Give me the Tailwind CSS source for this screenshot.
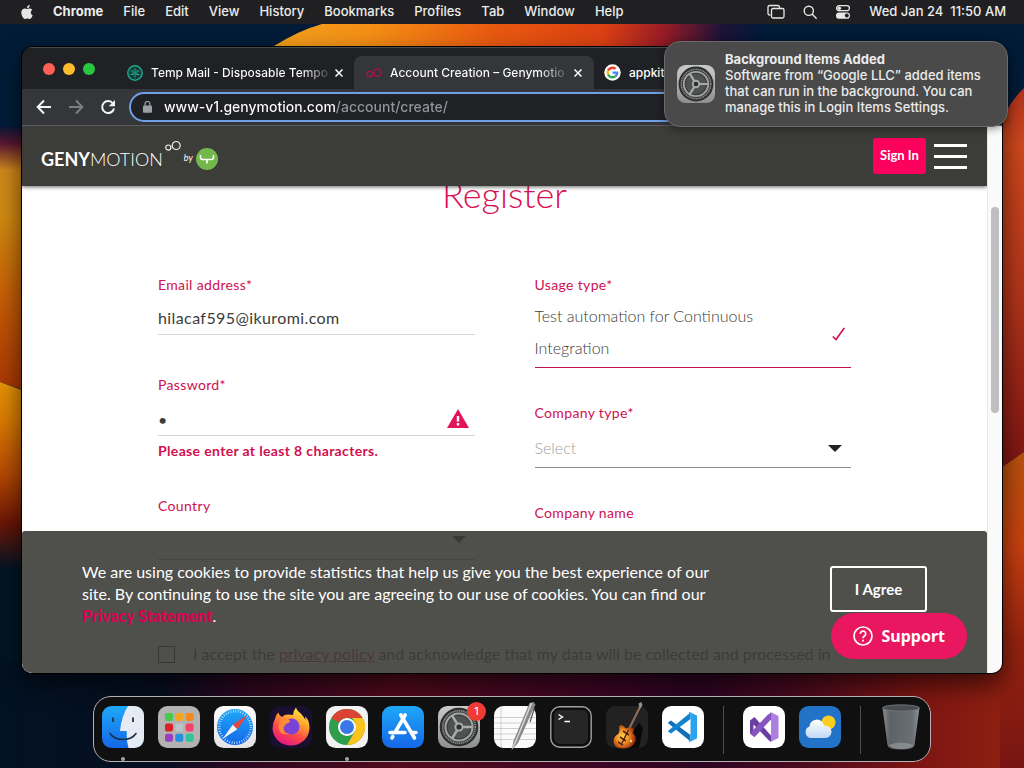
<!DOCTYPE html>
<html lang="en">
<head>
  <meta charset="UTF-8" />
  <meta name="viewport" content="width=device-width, initial-scale=1" />
  <title>Account Creation – Genymotion</title>
  <script src="https://cdn.jsdelivr.net/npm/@tailwindcss/browser@4"></script>
</head>
<body class="bg-[#021526]">

<!-- Shared icons -->
<svg width="0" height="0" class="absolute" aria-hidden="true">
  <defs>
    <linearGradient id="gSilver" x1="0" y1="0" x2="0" y2="1"><stop offset="0" stop-color="#c9cbca" /><stop offset="1" stop-color="#8d908e" /></linearGradient>
    <linearGradient id="gWhite" x1="0" y1="0" x2="0" y2="1"><stop offset="0" stop-color="#fdfdfd" /><stop offset="1" stop-color="#e2e2e4" /></linearGradient>
    <linearGradient id="gBlue" x1="0" y1="0" x2="0" y2="1"><stop offset="0" stop-color="#1fa8f8" /><stop offset="1" stop-color="#1567e6" /></linearGradient>
  </defs>
  <symbol id="settings" viewBox="0 0 42 42">
    <rect width="42" height="42" rx="9.5" fill="url(#gSilver)" />
    <circle cx="21" cy="21" r="18.5" fill="#3a3b3b" />
    <circle cx="21" cy="21" r="16.2" fill="none" stroke="#8f9190" stroke-width="1.6" stroke-dasharray="1.2 .8" />
    <circle cx="21" cy="21" r="13.5" fill="none" stroke="#a3a6a5" stroke-width="2" />
    <circle cx="21" cy="21" r="11.2" fill="#505252" />
    <circle cx="21" cy="21" r="3.6" fill="#2f3030" stroke="#a9acab" stroke-width="2" />
    <path d="M25 21h9M19 17.500l-5-8M19 24.500l-5 8" stroke="#a9acab" stroke-width="2.400" fill="none" />
    <circle cx="21" cy="21" r="18.500" fill="none" stroke="#2b2c2c" stroke-width="1.500" />
  </symbol>
</svg>

<div class="relative isolate flex min-h-screen flex-col overflow-hidden font-['Inter',sans-serif]">

  <!-- Wallpaper -->
  <svg class="absolute inset-0 -z-10 h-full w-full" viewBox="0 0 1024 768" preserveAspectRatio="none" aria-hidden="true">
    <defs>
      <linearGradient id="wTop" gradientUnits="userSpaceOnUse" x1="275" y1="0" x2="760" y2="40">
        <stop offset="0" stop-color="#f2a01c" /><stop offset=".2" stop-color="#f58f15" /><stop offset=".45" stop-color="#ea5a10" />
        <stop offset=".68" stop-color="#dc4013" /><stop offset=".8" stop-color="#9a1c26" /><stop offset=".92" stop-color="#1d1338" /><stop offset="1" stop-color="#031a38" />
      </linearGradient>
      <linearGradient id="wL1" x1="0" y1="0" x2="0" y2="1">
        <stop offset="0" stop-color="#02193a" /><stop offset=".07" stop-color="#5b1730" /><stop offset=".17" stop-color="#d0881c" />
        <stop offset=".35" stop-color="#d08a10" /><stop offset=".65" stop-color="#c55d06" /><stop offset="1" stop-color="#a83504" />
      </linearGradient>
      <linearGradient id="wL2" x1="0" y1="0" x2="0" y2="1">
        <stop offset="0" stop-color="#e59405" /><stop offset=".2" stop-color="#d97c02" /><stop offset=".5" stop-color="#b34703" />
        <stop offset=".75" stop-color="#6b1606" /><stop offset="1" stop-color="#021424" />
      </linearGradient>
      <linearGradient id="wR1" x1="0" y1="0" x2="0" y2="1">
        <stop offset="0" stop-color="#b5331e" /><stop offset=".15" stop-color="#d0481c" /><stop offset=".55" stop-color="#b0341a" /><stop offset="1" stop-color="#7c1312" />
      </linearGradient>
      <linearGradient id="wR2" x1="0" y1="0" x2="0" y2="1">
        <stop offset="0" stop-color="#b8520e" /><stop offset=".3" stop-color="#c8400f" /><stop offset=".6" stop-color="#96230f" /><stop offset="1" stop-color="#781512" />
      </linearGradient>
      <linearGradient id="wBottom" x1="0" y1="0" x2="1" y2="0">
        <stop offset="0" stop-color="#021222" /><stop offset=".16" stop-color="#060e20" /><stop offset=".24" stop-color="#2c0720" />
        <stop offset=".4" stop-color="#520a1c" /><stop offset=".6" stop-color="#3c0624" /><stop offset=".7" stop-color="#2c0522" />
        <stop offset=".8" stop-color="#4a0a1e" /><stop offset=".92" stop-color="#7c1512" /><stop offset="1" stop-color="#8c1f10" />
      </linearGradient>
    </defs>
    <rect width="1024" height="768" fill="#021c38" />
    <path d="M274 46Q300 30 322 24H770V46Z" fill="url(#wTop)" />
    <path d="M0 125H30V392L0 382Z" fill="url(#wL1)" />
    <path d="M0 382L30 393V570H0Z" fill="url(#wL2)" />
    <rect y="568" width="30" height="200" fill="#021424" />
    <path d="M1024 88Q1003 108 995 140V472L1024 452Z" fill="url(#wR1)" />
    <path d="M1024 452L995 472V768H1024Z" fill="url(#wR2)" />
    <path d="M0 660H1000V768H0Z" fill="url(#wBottom)" />
  </svg>

  <!-- Menu bar -->
  <header class="flex h-6 items-center bg-[#202022] pr-[18px] pl-5 text-[13px] font-medium text-[#ececec]">
    <svg class="mr-[19px] size-[14px]" viewBox="0 0 24 24" fill="#e4e4e4" aria-hidden="true"><path d="M12.152 6.896c-.948 0-2.415-1.078-3.96-1.04-2.04.027-3.91 1.183-4.961 3.014-2.117 3.675-.546 9.103 1.519 12.09 1.013 1.454 2.208 3.09 3.792 3.039 1.52-.065 2.09-.987 3.935-.987 1.831 0 2.35.987 3.96.948 1.637-.026 2.676-1.48 3.676-2.948 1.156-1.688 1.636-3.325 1.662-3.415-.039-.013-3.182-1.221-3.22-4.857-.026-3.04 2.48-4.494 2.597-4.559-1.429-2.09-3.623-2.324-4.39-2.376-2-.156-3.675 1.09-4.61 1.09zM15.53 3.83c.843-1.012 1.4-2.427 1.245-3.83-1.207.052-2.662.805-3.532 1.818-.78.896-1.454 2.338-1.273 3.714 1.338.104 2.715-.688 3.559-1.701" /></svg>
    <nav class="flex gap-5">
      <button class="font-bold">Chrome</button>
      <button>File</button>
      <button>Edit</button>
      <button>View</button>
      <button>History</button>
      <button>Bookmarks</button>
      <button>Profiles</button>
      <button>Tab</button>
      <button>Window</button>
      <button>Help</button>
    </nav>
    <div class="ml-auto flex items-center gap-[18px]">
      <svg class="h-4 w-[18px]" viewBox="0 0 18 16" fill="none" stroke="#e8e8e8" stroke-width="1.3" aria-hidden="true"><path d="M3.500 11H2.500A1.500 1.500 0 0 1 1 9.500V3A1.500 1.500 0 0 1 2.500 1.500H11A1.500 1.500 0 0 1 12.500 3V4" /><rect x="4.500" y="4.500" width="12.500" height="9.500" rx="1.500" /></svg>
      <svg class="size-[14px]" viewBox="0 0 14 14" fill="none" stroke="#e8e8e8" stroke-width="1.400" stroke-linecap="round" aria-hidden="true"><circle cx="5.800" cy="5.800" r="4.600" /><path d="M9.300 9.300l3.900 3.900" /></svg>
      <svg class="h-[14px] w-4" viewBox="0 0 16 14" aria-hidden="true"><rect x="1.600" y=".7" width="12.800" height="5" rx="2.500" fill="none" stroke="#e8e8e8" stroke-width="1.300" /><circle cx="4.300" cy="3.200" r="1.800" fill="#e8e8e8" /><rect x="1" y="7.500" width="14" height="6.300" rx="3.100" fill="#e8e8e8" /><circle cx="11.800" cy="10.600" r="2" fill="#202022" /></svg>
      <time class="whitespace-pre">Wed Jan 24  11:50 AM</time>
    </div>
  </header>

  <!-- Browser window -->
  <main class="mt-[22px] mr-[21px] ml-[21px] flex flex-1 flex-col overflow-hidden rounded-[11px] border border-black bg-[#202124] shadow-[0_10px_24px_rgba(0,0,0,0.6)]">

    <!-- Tabs -->
    <div class="flex h-[42px] shrink-0 border-t border-[#4a4b4d] text-xs font-medium text-white">
      <div class="flex w-[332px] items-center pt-2 pl-[21px]">
        <div class="-mt-2 flex gap-2">
          <button aria-label="Close window" class="size-3 rounded-full bg-[#ff5f57]"></button>
          <button aria-label="Minimize window" class="size-3 rounded-full bg-[#febc2e]"></button>
          <button aria-label="Zoom window" class="size-3 rounded-full bg-[#28c840]"></button>
        </div>
        <svg class="ml-8 size-4 shrink-0" viewBox="0 0 16 16" fill="none" stroke="#1fa68a" aria-hidden="true"><circle cx="8" cy="8" r="7.200" stroke-width="1.500" fill="#173d3a" /><path d="M3.500 6H7M9 6h3.500M3.500 9.500H7M9 9.500h3.500M8 3.500v9M5 8h6" stroke-width="1.100" /></svg>
        <span class="ml-2 bg-linear-to-r from-white from-85% to-white/20 bg-clip-text whitespace-nowrap text-transparent">Temp Mail - Disposable Tempo</span>
        <button aria-label="Close tab" class="mr-[7px] ml-auto grid size-4 shrink-0 place-items-center"><svg class="size-2" viewBox="0 0 8 8" stroke="#fff" stroke-width="1.500" aria-hidden="true"><path d="M.5.5l7 7M7.500.5l-7 7" /></svg></button>
      </div>
      <div class="mt-2 flex w-60 items-center rounded-t-lg bg-[#35363a] pl-3">
        <svg class="h-3 w-4 shrink-0" viewBox="0 0 16 12" fill="none" stroke="#a01843" stroke-width="1.400" aria-hidden="true"><circle cx="3.800" cy="7" r="2.800" /><circle cx="11.500" cy="5.600" r="3.700" /></svg>
        <span class="ml-2 bg-linear-to-r from-white from-85% to-white/20 bg-clip-text whitespace-nowrap text-transparent">Account Creation – Genymotio</span>
        <button aria-label="Close tab" class="mr-2 ml-auto grid size-4 shrink-0 place-items-center"><svg class="size-2" viewBox="0 0 8 8" stroke="#fff" stroke-width="1.500" aria-hidden="true"><path d="M.5.5l7 7M7.500.5l-7 7" /></svg></button>
      </div>
      <div class="flex items-center pt-2 pl-[10px]">
        <svg class="size-[17px]" viewBox="-10 -10 68 68" aria-hidden="true"><circle cx="24" cy="24" r="33" fill="#fff" /><path fill="#EA4335" d="M24 9.500c3.540 0 6.710 1.220 9.210 3.600l6.850-6.850C35.900 2.380 30.470 0 24 0 14.620 0 6.510 5.380 2.560 13.220l7.980 6.190C12.430 13.720 17.740 9.500 24 9.500z" /><path fill="#4285F4" d="M46.980 24.550c0-1.570-.15-3.090-.38-4.550H24v9.020h12.940c-.58 2.960-2.260 5.480-4.780 7.180l7.730 6c4.510-4.180 7.090-10.360 7.090-17.650z" /><path fill="#FBBC05" d="M10.530 28.590c-.48-1.450-.76-2.990-.76-4.590s.27-3.140.76-4.590l-7.980-6.190C.92 16.460 0 20.120 0 24c0 3.880.92 7.540 2.560 10.780l7.970-6.190z" /><path fill="#34A853" d="M24 48c6.480 0 11.930-2.130 15.890-5.810l-7.730-6c-2.150 1.450-4.920 2.300-8.160 2.300-6.260 0-11.570-4.220-13.470-9.910l-7.980 6.190C6.510 42.620 14.620 48 24 48z" /></svg>
        <span class="ml-2">appkit</span>
      </div>
    </div>

    <!-- Toolbar -->
    <div class="flex h-[37px] shrink-0 items-center border-b border-[#5c5d60] bg-[#35363a] pl-[14px]">
      <button aria-label="Back" class="mr-4"><svg class="size-4" viewBox="0 0 16 16" fill="none" stroke="#f1f3f4" stroke-width="2" aria-hidden="true"><path d="M15 8H2M8 1.500L1.700 8L8 14.500" /></svg></button>
      <button aria-label="Forward" class="mr-4"><svg class="size-4" viewBox="0 0 16 16" fill="none" stroke="#7d7e81" stroke-width="2" aria-hidden="true"><path d="M1 8H14M8 1.500L14.300 8L8 14.500" /></svg></button>
      <button aria-label="Reload" class="mr-[13px]"><svg class="size-4" viewBox="0 0 16 16" aria-hidden="true"><path d="M13 4.500A6 6 0 1 0 14 9.500" fill="none" stroke="#f1f3f4" stroke-width="2" /><path d="M15 1v6.300H8.700z" fill="#f1f3f4" /></svg></button>
      <div class="flex h-[30px] flex-1 items-center rounded-full border-2 border-[#6f9fe4] bg-[#202124] pl-3">
        <svg class="mr-3 h-3 w-[9px]" viewBox="0 0 9 12" aria-hidden="true"><rect y="4.500" width="9" height="7.200" rx="1" fill="#9aa0a6" /><path d="M2 5V3a2.500 2.500 0 0 1 5 0v2" fill="none" stroke="#9aa0a6" stroke-width="1.200" /></svg>
        <input aria-label="Address" type="text" value="www-v1.genymotion.com/account/create/" class="flex-1 bg-[linear-gradient(90deg,#fff_171px,#93979c_171px)] bg-clip-text text-sm font-medium text-transparent outline-none" />
      </div>
    </div>

    <div class="flex flex-1 bg-[#fafafb]">
      <!-- Web page -->
      <div class="relative flex-1 overflow-hidden bg-white font-['Lato',sans-serif] text-[#3c3c39]">
        <header class="relative z-10 flex h-[60px] items-center bg-[#3c3c39] pr-5 pl-[19px] shadow-[0_1px_4px_rgba(0,0,0,0.6)]">
          <a href="#" class="flex items-center text-white" aria-label="Genymotion">
            <span class="pt-[6px] text-lg"><b>GENY</b><span class="font-light">MOTION</span></span>
            <svg class="mb-5 ml-[2px] h-3 w-4" viewBox="0 0 16 12" fill="none" stroke="#eee" stroke-width="1.200" aria-hidden="true"><circle cx="3.300" cy="7.600" r="2.600" /><circle cx="11.200" cy="5.500" r="4" /></svg>
            <i class="mr-[3px] ml-[3px] pt-1 text-[9px]">by</i>
            <svg class="mt-[6px] size-[22px]" viewBox="0 0 22 22" fill="none" stroke="#fff" stroke-width="1.600" aria-hidden="true"><circle cx="11" cy="11" r="11" fill="#72b84c" stroke="none" /><path d="M4.500 7v2.500Q4.500 11.500 6.500 11.500H15.500Q17.500 11.500 17.500 9.500V7M11 11.500v4" /></svg>
          </a>
          <button class="ml-auto h-9 w-[53px] rounded-[3px] bg-[#fb005c] text-[13px] font-bold text-white">Sign In</button>
          <button aria-label="Menu" class="ml-2 flex w-[33px] flex-col gap-2">
            <span class="h-[3px] bg-white"></span>
            <span class="h-[3px] bg-white"></span>
            <span class="h-[3px] bg-white"></span>
          </button>
        </header>

        <form class="mx-auto max-w-[693px]">
          <h1 class="-mt-[14px] h-11 text-center text-[36px] leading-[44px] font-light text-[#d90f52]">Register</h1>

          <div class="mt-[59px] grid grid-cols-2 gap-[60px] text-[#d0104f]">
            <div>
              <label for="email" class="block text-sm leading-5 tracking-wide">Email address*</label>
              <input id="email" type="email" value="hilacaf595@ikuromi.com" class="h-10 w-full border-b border-[#d6d6d6] pt-[6px] text-base tracking-wide text-[#3c3c39] outline-none" />

              <label for="password" class="mt-10 block text-sm leading-5 tracking-wide">Password*</label>
              <div class="relative">
                <input id="password" type="password" value="g" class="h-[41px] w-full border-b border-[#d6d6d6] pt-2 text-base text-[#3c3c39] outline-none" />
                <svg class="absolute right-[6px] bottom-[7px] h-5 w-[22px]" viewBox="0 0 22 20" aria-hidden="true"><path d="M11 0L22 19H0z" fill="#e2135a" /><path d="M11 7v5.500M11 14v2.500" stroke="#fff" stroke-width="2.400" /></svg>
              </div>
              <p class="mt-[5px] text-sm leading-5 font-bold tracking-wide">Please enter at least 8 characters.</p>

              <label for="country" class="mt-[35px] block text-sm leading-5 tracking-wide">Country</label>
              <div class="relative">
                <select id="country" class="h-11 w-full appearance-none border-b border-[#9a9a9a] text-base text-[#3c3c39]"><option></option></select>
                <svg class="absolute top-5 right-[9px] h-[7px] w-[14px]" viewBox="0 0 14 7" aria-hidden="true"><path d="M0 0h14L7 7z" fill="#222" /></svg>
              </div>
            </div>

            <div>
              <label for="usage" class="block text-sm leading-5 tracking-wide">Usage type*</label>
              <div class="relative mt-[5px] flex items-center justify-between pb-[3px]">
                <span class="max-w-[240px] text-base leading-8 font-light text-[#3c3c39]">Test automation for Continuous Integration</span>
                <svg class="mt-1 mr-[6px] h-[14px] w-[13px]" viewBox="0 0 13 14" fill="none" stroke="#d0104f" stroke-width="1.600" aria-hidden="true"><path d="M.8 9.500L4 12.500L12.300 1" /></svg>
                <select id="usage" class="absolute inset-0 w-full opacity-0"><option>Test automation for Continuous Integration</option></select>
              </div>
              <div class="h-px bg-[#c4124f]"></div>

              <label for="company-type" class="mt-[35px] block text-sm leading-5 tracking-wide">Company type*</label>
              <div class="relative">
                <select id="company-type" class="h-[45px] w-full appearance-none border-b border-[#8c8c8c] pt-[6px] text-base font-light text-[#a3a3a1]"><option>Select</option></select>
                <svg class="absolute top-[22px] right-[9px] h-[7px] w-[14px]" viewBox="0 0 14 7" aria-hidden="true"><path d="M0 0h14L7 7z" fill="#222" /></svg>
              </div>

              <label for="company-name" class="mt-[35px] block text-sm leading-5 tracking-wide">Company name</label>
              <input id="company-name" type="text" class="h-10 w-full outline-none" />
            </div>
          </div>

          <div class="mt-[79px] flex items-center">
            <input id="accept" type="checkbox" class="mr-[18px] size-[17px] shrink-0 appearance-none border border-black" />
            <label for="accept" class="whitespace-nowrap">I accept the <a href="#" class="text-[#d0104f] underline">privacy policy</a> and acknowledge that my data will be collected and processed in</label>
          </div>
        </form>

        <!-- Cookie notice -->
        <section class="absolute inset-x-0 bottom-0 flex h-[142px] items-start justify-between rounded-t-[3px] bg-[#3c3c39]/90 px-[60px] text-white">
          <p class="max-w-[640px] pt-[30px] text-base leading-[22px]">We are using cookies to provide statistics that help us give you the best experience of our site. By continuing to use the site you are agreeing to our use of cookies. You can find our <a href="#" class="font-black text-[#d90351]">Privacy Statement</a>.</p>
          <button class="mt-[35px] h-[46px] w-[97px] shrink-0 rounded-[3px] border-2 border-white text-[15px] font-bold">I Agree</button>
        </section>
        <button class="absolute right-5 bottom-[14px] flex h-[46px] items-center rounded-full bg-[#e9175f] px-[22px] font-['Noto_Sans',sans-serif] text-base font-bold text-white">
          <svg class="mr-2 size-5" viewBox="0 0 20 20" fill="none" stroke="#fff" stroke-width="1.700" aria-hidden="true"><circle cx="10" cy="10" r="9" /><path d="M7.300 7.800a2.700 2.700 0 1 1 4.200 2.200Q10 11 10 12.200" /><path d="M10 13.700v1.800" /></svg>
          Support
        </button>
      </div>

      <!-- Scrollbar -->
      <div class="w-[15px] border-l border-[#e8e8e8]">
        <div class="mx-auto mt-[81px] h-[206px] w-2 rounded-full bg-[#bfbfc1]"></div>
      </div>
    </div>
  </main>

  <!-- Dock -->
  <footer class="mx-auto mt-[22px] mb-[6px] flex h-[66px] items-start gap-[14px] rounded-[18px] border border-[#b9b0b4] bg-[#101011] px-2 pt-[9px]">
    <button aria-label="Finder" class="relative size-[42px]">
      <svg viewBox="0 0 42 42" aria-hidden="true"><rect width="42" height="42" rx="9.500" fill="url(#gBlue)" /><path d="M26 0H32.500A9.500 9.500 0 0 1 42 9.500V32.500A9.500 9.500 0 0 1 32.500 42H26.500Q24 34 24.700 25H18Q19.500 10 26 0z" fill="#e6eaf3" /><path d="M11 11.500v4.500M31 11.500v4.500" stroke="#18324d" stroke-width="1.800" /><path d="M8 27.500Q12 33.500 21 33.500T34 27.500" fill="none" stroke="#18324d" stroke-width="1.600" stroke-linecap="round" /></svg>
      <span class="absolute -bottom-[13px] left-[19px] size-1 rounded-full bg-[#a5a5a5]"></span>
    </button>
    <button aria-label="Launchpad" class="size-[42px]">
      <svg viewBox="0 0 42 42" aria-hidden="true"><rect width="42" height="42" rx="9.500" fill="#b3b2b0" /><rect x="7" y="7" width="8" height="8" rx="2" fill="#48c94b" /><rect x="17.300" y="7" width="8" height="8" rx="2" fill="#f2a620" /><rect x="27.600" y="7" width="8" height="8" rx="2" fill="#f28a1f" /><rect x="7" y="17.400" width="8" height="8" rx="2" fill="#d92128" /><rect x="17.300" y="17.400" width="8" height="8" rx="2" fill="#b9c3c8" /><rect x="27.600" y="17.400" width="8" height="8" rx="2" fill="#f2436b" /><rect x="7" y="27.800" width="8" height="8" rx="2" fill="#9a3fc4" /><rect x="17.300" y="27.800" width="8" height="8" rx="2" fill="#258fe0" /><rect x="27.600" y="27.800" width="8" height="8" rx="2" fill="#31c39b" /></svg>
    </button>
    <button aria-label="Safari" class="size-[42px]">
      <svg viewBox="0 0 42 42" aria-hidden="true"><rect width="42" height="42" rx="9.500" fill="url(#gWhite)" /><circle cx="21" cy="21" r="18" fill="url(#gBlue)" /><circle cx="21" cy="21" r="15.800" fill="none" stroke="#d8ecff" stroke-width="2.600" stroke-dasharray=".7 1.780" /><path d="M33.500 9L23.300 23.200L18.700 18.800z" fill="#e8453c" /><path d="M8.500 33L18.700 18.800L23.300 23.200z" fill="#f4f4f4" /></svg>
    </button>
    <button aria-label="Firefox" class="size-[42px]">
      <svg viewBox="0 0 42 42" aria-hidden="true"><defs><linearGradient id="fx" x1=".8" y1="0" x2=".3" y2="1"><stop offset="0" stop-color="#fff044" /><stop offset=".35" stop-color="#ffa52e" /><stop offset=".65" stop-color="#ff4a44" /><stop offset="1" stop-color="#e31587" /></linearGradient></defs><rect width="42" height="42" rx="9.500" fill="#1b0f31" /><path d="M26 1.500Q23 5 23 9Q14 7.500 12.500 11Q9 9.500 8.500 6.500Q5.500 9 5.300 12Q2.500 17 2.500 23C3.500 33 11 39.500 21 39.500S39.500 32 39.500 21.500Q39 13 35 10.500Q35.500 13 35.500 14Q32 8 29 6Q26.500 4 26 1.500z" fill="url(#fx)" /><circle cx="21.500" cy="20.500" r="8" fill="#7b42d6" /><path d="M12 13Q17 11 20 14.500Q20 17 15.500 18Q15.500 20 13.500 21Q12 27 20 28Q9 30 8.500 21Q9 16 12 13z" fill="#ff8a35" /></svg>
    </button>
    <button aria-label="Google Chrome" class="relative size-[42px]">
      <svg viewBox="0 0 42 42" aria-hidden="true"><rect width="42" height="42" rx="9.500" fill="#f1f1f1" /><circle cx="21" cy="21" r="18" fill="#2e9e4c" /><path d="M21 3A18 18 0 0 1 36.600 12H21Q15.500 12 13.200 16.500L5.400 12A18 18 0 0 1 21 3z" fill="#db4335" /><path d="M36.600 12A18 18 0 0 1 21 39L28.800 25.500Q32 18.500 26 12z" fill="#fcc31e" /><circle cx="21" cy="21" r="9" fill="#fff" /><circle cx="21" cy="21" r="7" fill="#3b78e7" /></svg>
      <span class="absolute -bottom-[13px] left-[19px] size-1 rounded-full bg-[#a5a5a5]"></span>
    </button>
    <button aria-label="App Store" class="size-[42px]">
      <svg viewBox="0 0 42 42" fill="none" stroke="#fff" stroke-width="3.600" stroke-linecap="round" aria-hidden="true"><rect width="42" height="42" rx="9.500" fill="url(#gBlue)" stroke="none" /><path d="M23.200 9L13 26.500M18.800 9L32.500 32M8 26.500H23M30 26.500H34M10.800 30.500L10 32" /></svg>
    </button>
    <button aria-label="System Settings" class="relative size-[42px]">
      <svg class="size-[42px]" aria-hidden="true"><use href="#settings" /></svg>
      <span class="absolute -top-1 -right-[6px] grid size-[19px] place-items-center rounded-full bg-[#ee3b36] text-[11px] text-white">1</span>
    </button>
    <button aria-label="TextEdit" class="size-[42px]">
      <svg class="overflow-visible" viewBox="0 0 42 42" aria-hidden="true"><rect width="42" height="42" rx="9.500" fill="#fbfbfb" /><path d="M0 11.500H42M0 17H42M0 22.500H42M0 28H42M0 33.500H42" stroke="#c9c9c9" stroke-width=".9" /><path d="M7 0V42" stroke="#d8c3bf" stroke-width=".8" /><path d="M35.500-3L39.500-4L41.500-1.500L24 37L17.500 44.500L19.500 35z" fill="#85898c" /><path d="M37.500-3L21.500 36L18.500 42" stroke="#d8dadb" stroke-width="1.400" fill="none" /><path d="M40.500 2L36 16" stroke="#55585a" stroke-width="1.200" /></svg>
    </button>
    <button aria-label="Terminal" class="size-[42px]">
      <svg viewBox="0 0 42 42" aria-hidden="true"><rect x=".8" y=".8" width="40.400" height="40.400" rx="9" fill="#0d0d0e" stroke="#a2a2a3" stroke-width="1.400" /><rect x="4" y="4" width="34" height="34" rx="6" fill="#262627" /><path d="M8.500 8.500L12.500 11L8.500 13.500M14.500 15.500H20" stroke="#fff" stroke-width="1.400" fill="none" /></svg>
    </button>
    <button aria-label="GarageBand" class="size-[42px]">
      <svg class="overflow-visible" viewBox="0 0 42 42" aria-hidden="true"><defs><radialGradient id="gb" cx=".4" cy=".5" r=".6"><stop offset="0" stop-color="#ffd34a" /><stop offset=".5" stop-color="#ef8a24" /><stop offset="1" stop-color="#8f230e" /></radialGradient></defs><rect width="42" height="42" rx="9.500" fill="#222223" /><path d="M22 32L33 17L37 22L33 42H24z" fill="#090909" /><path d="M35-1L21 27" stroke="#8a6a58" stroke-width="2.200" /><path d="M32.500-2.500L35.500-4L36.500-.5L33.500 3z" fill="#8e9091" /><path d="M13.500 24Q12.500 19.500 15 19Q17.500 19 20 22.500L23 21.500Q26 20.500 27.500 22.500Q28.500 24.500 26.500 27Q31 30 29.500 35.500Q26 42.500 17 42.500Q7.500 42.500 7.500 35Q8 30 11.500 28.500Q13.500 27 13.500 24z" fill="url(#gb)" /><path d="M17 25l6 4M14 31l6 4M12 36l5 3" stroke="#5a2410" stroke-width="1.600" /><path d="M22.500 24L16 37" stroke="#3a1a10" stroke-width="1.200" /><circle cx="25" cy="35" r="1.200" fill="#f7d78a" /></svg>
    </button>
    <button aria-label="Visual Studio Code" class="size-[42px]">
      <svg viewBox="0 0 42 42" aria-hidden="true"><rect width="42" height="42" rx="9.500" fill="#fff" /><path d="M6 16.500L9 14.500L28.500 29V35.500L6.500 17.500z" fill="#0f6fb8" /><path d="M6 25.500L9 27.500L28.500 13V6.500L6.500 24.500z" fill="#1382cf" /><path d="M27.500 6L35 9.500V32.500L27.500 36L26.500 35Q28.500 35 28.500 33V9Q28.500 7 26.500 7z" fill="#2ba2ee" /></svg>
    </button>
    <span class="mx-[5px] h-12 w-px bg-[#505052]"></span>
    <button aria-label="Visual Studio" class="size-[42px]">
      <svg viewBox="0 0 42 42" aria-hidden="true"><rect width="42" height="42" rx="9.500" fill="#fff" /><path d="M7 14.500L11.500 11L28 29.500V36L26 34.500L12.500 20.500L10.500 18.500V24.500L12 23L15.500 26.500L11.500 31L7 27.500z" fill="#6b3fa0" /><path d="M7 27.500L11.500 31L28 13.500V6.500L24.500 9L12.500 21.500z" fill="#8655c0" /><path d="M27.500 6L35.500 10V32L27.500 36Q28 35 28 33V9Q28 7 27.500 6z" fill="#ae7fe2" /></svg>
    </button>
    <button aria-label="Weather" class="size-[42px]">
      <svg viewBox="0 0 42 42" aria-hidden="true"><defs><linearGradient id="cl" x1="0" y1="0" x2="0" y2="1"><stop offset="0" stop-color="#fff" /><stop offset="1" stop-color="#c2d8f6" /></linearGradient></defs><rect width="42" height="42" rx="9.500" fill="#2272c8" /><circle cx="29.500" cy="16.500" r="7" fill="#fbcf1f" /><path d="M11.500 32A6 6 0 0 1 10.500 20.500Q11 14 18 13.500Q23.500 14 25 19.500Q32.500 19.500 32.500 26Q32 31.500 26.500 32z" fill="url(#cl)" /></svg>
    </button>
    <span class="mx-[5px] h-12 w-px bg-[#505052]"></span>
    <button aria-label="Trash" class="size-[42px]">
      <svg class="overflow-visible" viewBox="0 0 42 42" aria-hidden="true"><defs><linearGradient id="tr" x1="0" y1="0" x2="1" y2="0"><stop offset="0" stop-color="#8b8e91" /><stop offset=".2" stop-color="#5d6266" /><stop offset=".8" stop-color="#6a6f73" /><stop offset="1" stop-color="#8f9295" /></linearGradient></defs><path d="M2.500 1.500L7.500 39Q8 43.500 21 43.500T34.500 39L39.500 1.500z" fill="url(#tr)" /><ellipse cx="21" cy="2" rx="18.500" ry="3.200" fill="#4a4e52" stroke="#7a7e82" stroke-width=".8" /><path d="M8.500 39Q21 34 33.500 39Q30 43 21 43T8.500 39z" fill="#94989a" opacity=".7" /></svg>
    </button>
  </footer>

  <!-- Notification -->
  <aside class="absolute top-[41px] right-4 z-20 flex h-[86px] w-[344px] items-center rounded-2xl border border-[#6a6a6a] bg-[#4a4a4b] pl-3 text-[13px] leading-4 font-medium text-[#ececec] shadow-[0_2px_8px_rgba(0,0,0,0.4)]">
    <svg class="mr-[10px] size-[38px] shrink-0" aria-hidden="true"><use href="#settings" /></svg>
    <div class="max-w-[256px] pb-[2px]">
      <h2 class="font-bold">Background Items Added</h2>
      <p>Software from “Google LLC” added items that can run in the background. You can manage this in Login Items Settings.</p>
    </div>
  </aside>
</div>

</body>
</html>
